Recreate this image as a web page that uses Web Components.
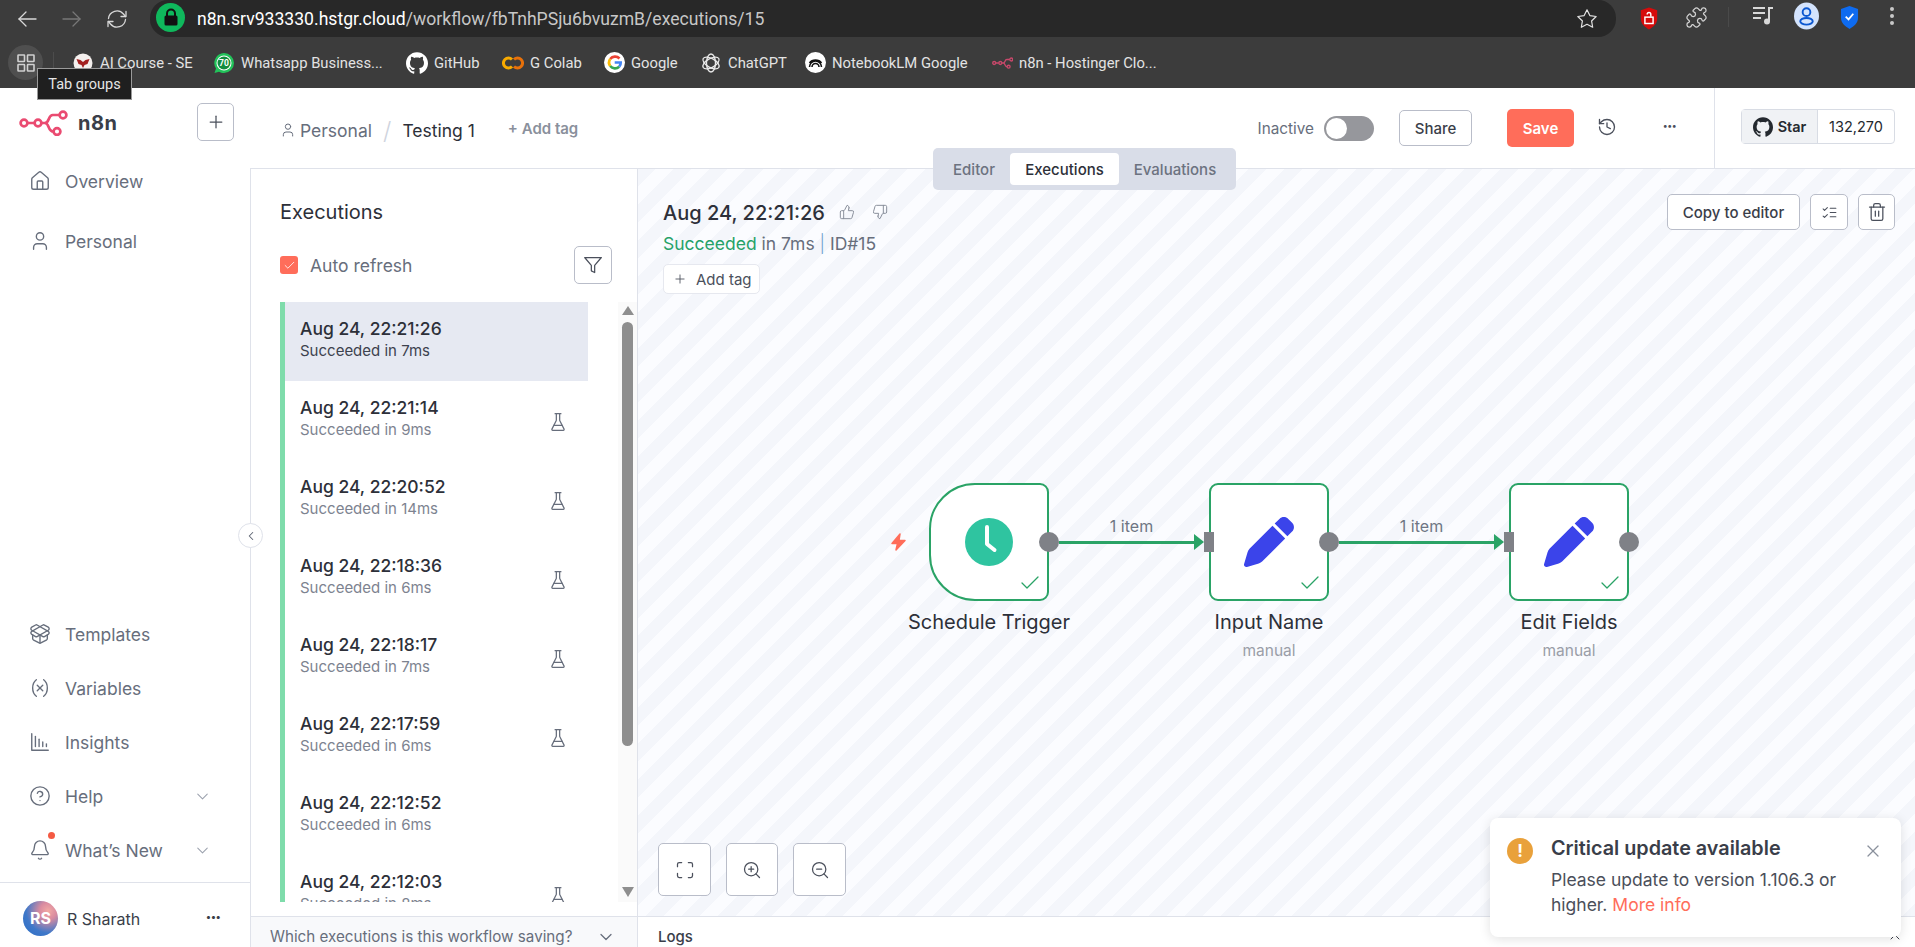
<!DOCTYPE html>
<html lang="en">
<head>
<meta charset="utf-8">
<title>n8n executions</title>
<style>
  html, body { margin: 0; padding: 0; width: 1915px; height: 947px; overflow: hidden; background: #fff; }
  body { display: flex; flex-direction: column; font-family: Inter, "Liberation Sans", sans-serif; color: #2d3039; }
</style>
</head>
<body>
<browser-chrome></browser-chrome>
<n8n-app>
  <n8n-sidebar slot="side"></n8n-sidebar>
  <n8n-header slot="head"></n8n-header>
  <exec-panel slot="panel">
    <exec-item date="Aug 24, 22:21:26" time="7ms" selected></exec-item>
    <exec-item date="Aug 24, 22:21:14" time="9ms" flask></exec-item>
    <exec-item date="Aug 24, 22:20:52" time="14ms" flask></exec-item>
    <exec-item date="Aug 24, 22:18:36" time="6ms" flask></exec-item>
    <exec-item date="Aug 24, 22:18:17" time="7ms" flask></exec-item>
    <exec-item date="Aug 24, 22:17:59" time="6ms" flask></exec-item>
    <exec-item date="Aug 24, 22:12:52" time="6ms"></exec-item>
    <exec-item date="Aug 24, 22:12:03" time="8ms" flask></exec-item>
  </exec-panel>
  <workflow-canvas slot="canvas">
    <wf-edge x1="421" x2="566" y="373">1 item</wf-edge>
    <wf-edge x1="701" x2="866" y="373">1 item</wf-edge>
    <wf-node x="291" y="314" kind="trigger">Schedule Trigger</wf-node>
    <wf-node x="571" y="314" kind="pen" sub="manual">Input Name</wf-node>
    <wf-node x="871" y="314" kind="pen" sub="manual">Edit Fields</wf-node>
  </workflow-canvas>
</n8n-app>
<update-toast></update-toast>

<script>
const ICONS = {
  house: '<path d="M15 21v-8a1 1 0 0 0-1-1h-4a1 1 0 0 0-1 1v8"/><path d="M3 10a2 2 0 0 1 .709-1.528l7-5.999a2 2 0 0 1 2.582 0l7 5.999A2 2 0 0 1 21 10v9a2 2 0 0 1-2 2H5a2 2 0 0 1-2-2z"/>',
  user: '<path d="M19 21v-2a4 4 0 0 0-4-4H9a4 4 0 0 0-4 4v2"/><circle cx="12" cy="7" r="4"/>',
  box: '<path d="M12 22v-9"/><path d="M15.17 2.21a1.67 1.67 0 0 1 1.63 0L21 4.57a1.93 1.93 0 0 1 0 3.36L8.82 14.79a1.655 1.655 0 0 1-1.64 0L3 12.43a1.93 1.93 0 0 1 0-3.36z"/><path d="M20 13v3.87a2.06 2.06 0 0 1-1.11 1.83l-6 3.08a1.93 1.93 0 0 1-1.78 0l-6-3.08A2.06 2.06 0 0 1 4 16.87V13"/><path d="M21 12.43a1.93 1.93 0 0 0 0-3.36L8.83 2.2a1.64 1.64 0 0 0-1.63 0L3 4.57a1.93 1.93 0 0 0 0 3.36l12.18 6.86a1.636 1.636 0 0 0 1.63 0z"/>',
  variable: '<path d="M8 21s-4-3-4-9 4-9 4-9"/><path d="M16 3s4 3 4 9-4 9-4 9"/><path d="m15 9-6 6"/><path d="m9 9 6 6"/>',
  chart: '<path d="M3 3v18h18"/><path d="M7 17V6"/><path d="M11 17V9"/><path d="M15 17v-5"/><path d="M19 17v-3"/>',
  help: '<circle cx="12" cy="12" r="10"/><path d="M9.09 9a3 3 0 0 1 5.83 1c0 2-3 3-3 3"/><path d="M12 17h.01"/>',
  bell: '<path d="M10.268 21a2 2 0 0 0 3.464 0"/><path d="M3.262 15.326A1 1 0 0 0 4 17h16a1 1 0 0 0 .74-1.673C19.41 13.956 18 12.499 18 8A6 6 0 0 0 6 8c0 4.499-1.411 5.956-2.738 7.326"/>',
  chevron: '<path d="m6 9 6 6 6-6"/>',
  chevronup: '<path d="m18 15-6-6-6 6"/>',
  chevronleft: '<path d="m15 18-6-6 6-6"/>',
  plus: '<path d="M5 12h14"/><path d="M12 5v14"/>',
  filter: '<polygon points="22 3 2 3 10 12.46 10 19 14 21 14 12.46 22 3"/>',
  flask: '<path d="M10 2v7.527a2 2 0 0 1-.211.896L4.72 20.55a1 1 0 0 0 .9 1.45h12.76a1 1 0 0 0 .9-1.45l-5.069-10.127A2 2 0 0 1 14 9.527V2"/><path d="M8.5 2h7"/><path d="M7 16h10"/>',
  history: '<path d="M3 12a9 9 0 1 0 9-9 9.75 9.75 0 0 0-6.74 2.74L3 8"/><path d="M3 3v5h5"/><path d="M12 7v5l4 2"/>',
  thumbup: '<path d="M7 10v12"/><path d="M15 5.88 14 10h5.83a2 2 0 0 1 1.92 2.56l-2.33 8A2 2 0 0 1 17.5 22H4a2 2 0 0 1-2-2v-8a2 2 0 0 1 2-2h2.76a2 2 0 0 0 1.79-1.11L12 2a3.13 3.13 0 0 1 3 3.88Z"/>',
  thumbdown: '<path d="M17 14V2"/><path d="M9 18.12 10 14H4.17a2 2 0 0 1-1.92-2.56l2.33-8A2 2 0 0 1 6.5 2H20a2 2 0 0 1 2 2v8a2 2 0 0 1-2 2h-2.76a2 2 0 0 0-1.79 1.11L12 22a3.13 3.13 0 0 1-3-3.88Z"/>',
  checks: '<path d="m3 7 2 2 4-4"/><path d="m3 17 2 2 4-4"/><path d="M13 6h8"/><path d="M13 12h8"/><path d="M13 18h8"/>',
  trash: '<path d="M3 6h18"/><path d="M19 6v14c0 1-1 2-2 2H7c-1 0-2-1-2-2V6"/><path d="M8 6V4c0-1 1-2 2-2h4c1 0 2 1 2 2v2"/><path d="M10 11v6"/><path d="M14 11v6"/>',
  fit: '<path d="M8 3H5a2 2 0 0 0-2 2v3"/><path d="M21 8V5a2 2 0 0 0-2-2h-3"/><path d="M3 16v3a2 2 0 0 0 2 2h3"/><path d="M16 21h3a2 2 0 0 0 2-2v-3"/>',
  zoomin: '<circle cx="11" cy="11" r="8"/><path d="m21 21-4.3-4.3"/><path d="M11 8v6"/><path d="M8 11h6"/>',
  zoomout: '<circle cx="11" cy="11" r="8"/><path d="m21 21-4.3-4.3"/><path d="M8 11h6"/>',
  close: '<path d="M18 6 6 18"/><path d="m6 6 12 12"/>',
  check: '<path d="M20 6 9 17l-5-5"/>',
  back: '<path d="m11 19-7-7 7-7"/><path d="M21 12H4"/>',
  forward: '<path d="M3 12h17"/><path d="m13 5 7 7-7 7"/>',
  reload: '<path d="M3.500 11.500a8.500 8.500 0 0 1 15-4.500l2 2.500"/><path d="M21 4.500v5h-5"/><path d="M20.500 12.500a8.500 8.500 0 0 1-15 4.500l-2-2.500"/><path d="M3 19.500v-5h5"/>',
  star: '<polygon points="12 2 15.09 8.26 22 9.27 17 14.14 18.18 21.02 12 17.77 5.82 21.02 7 14.14 2 9.27 8.91 8.26 12 2"/>',
  puzzle: '<path d="M15.39 4.39a1 1 0 0 0 1.68-.474 2.5 2.5 0 1 1 3.014 3.015 1 1 0 0 0-.474 1.68l1.683 1.682a2.414 2.414 0 0 1 0 3.414L19.61 15.39a1 1 0 0 1-1.68-.474 2.5 2.5 0 1 0-3.014 3.015 1 1 0 0 1 .474 1.68l-1.683 1.682a2.414 2.414 0 0 1-3.414 0L8.61 19.61a1 1 0 0 0-1.68.474 2.5 2.5 0 1 1-3.014-3.015 1 1 0 0 0 .474-1.68l-1.683-1.682a2.414 2.414 0 0 1 0-3.414L4.39 8.61a1 1 0 0 1 1.68.474 2.5 2.5 0 1 0 3.014-3.015 1 1 0 0 1-.474-1.68l1.683-1.682a2.414 2.414 0 0 1 3.414 0z"/>'
};
const GITHUB_PATH = 'M12 .297c-6.63 0-12 5.373-12 12 0 5.303 3.438 9.8 8.205 11.385.6.113.82-.258.82-.577 0-.285-.01-1.04-.015-2.04-3.338.724-4.042-1.61-4.042-1.61C4.422 18.07 3.633 17.7 3.633 17.7c-1.087-.744.084-.729.084-.729 1.205.084 1.838 1.236 1.838 1.236 1.07 1.835 2.809 1.305 3.495.998.108-.776.417-1.305.76-1.605-2.665-.3-5.466-1.332-5.466-5.93 0-1.31.465-2.38 1.235-3.22-.135-.303-.54-1.523.105-3.176 0 0 1.005-.322 3.3 1.23.96-.267 1.98-.399 3-.405 1.02.006 2.04.138 3 .405 2.28-1.552 3.285-1.23 3.285-1.23.645 1.653.24 2.873.12 3.176.765.84 1.23 1.91 1.23 3.22 0 4.61-2.805 5.625-5.475 5.92.42.36.81 1.096.81 2.22 0 1.606-.015 2.896-.015 3.286 0 .315.21.69.825.57C20.565 22.092 24 17.592 24 12.297c0-6.627-5.373-12-12-12';
const LOGO_MARK = '<g fill="none" stroke="currentColor"><circle cx="5" cy="13" r="3.4"/><circle cx="19" cy="13" r="3.4"/><circle cx="44" cy="5" r="3.4"/><circle cx="38" cy="21.5" r="3.4"/><path d="M8.4 13h7.2M22.4 13h3.4c5 0 3-8 8-8h6.8M25.8 13c5 0 2.6 8.500 8.800 8.500"/></g>';

class N8nIcon extends HTMLElement {
  constructor() {
    super();
    const size = this.getAttribute('size') || 20;
    const sw = this.getAttribute('stroke') || 2;
    this.attachShadow({ mode: 'open' });
    this.shadowRoot.innerHTML = `
      <style>:host { display: inline-flex; flex: none; width: ${size}px; height: ${size}px; } svg { display: block; }</style>
      <svg width="${size}" height="${size}" viewBox="0 0 24 24" fill="none" stroke="currentColor" stroke-width="${sw}" stroke-linecap="round" stroke-linejoin="round">${ICONS[this.getAttribute('name')] || ''}</svg>`;
  }
}
customElements.define('n8n-icon', N8nIcon);

// square outlined button used all over the workflow page
class IconButton extends HTMLElement {
  constructor() {
    super();
    const w = this.getAttribute('w') || 38;
    const h = this.getAttribute('h') || 38;
    this.attachShadow({ mode: 'open' });
    this.shadowRoot.innerHTML = `
      <style>
        :host { display: inline-flex; flex: none; align-items: center; justify-content: center; box-sizing: border-box; width: ${w}px; height: ${h}px;
          background: #fff; border: 1px solid #b9bdc9; border-radius: 5px; color: #4b505c; }
      </style>
      <n8n-icon name="${this.getAttribute('name')}" size="${this.getAttribute('size') || 20}" stroke="${this.getAttribute('stroke') || 1.7}"></n8n-icon>`;
  }
}
customElements.define('icon-button', IconButton);

class BookmarkItem extends HTMLElement {
  constructor() {
    super();
    this.attachShadow({ mode: 'open' });
    this.shadowRoot.innerHTML = `
      <style>
        :host { display: flex; flex: none; align-items: center; gap: 6px; width: ${this.getAttribute('w')}px; font-size: 14.8px; color: #e3e3e3; white-space: nowrap; }
        .ic { display: flex; width: 22px; height: 22px; flex: none; align-items: center; justify-content: center; }
      </style>
      <span class="ic"><slot name="icon"></slot></span><slot></slot>`;
  }
}
customElements.define('bookmark-item', BookmarkItem);

class BrowserChrome extends HTMLElement {
  constructor() {
    super();
    this.attachShadow({ mode: 'open' });
    this.shadowRoot.innerHTML = `
      <style>
        :host { display: block; flex: none; position: relative; z-index: 6; height: 88px; background: #3c3c3c; font-family: Roboto, "Liberation Sans", sans-serif; color: #e3e3e3; }
        .top { display: flex; align-items: center; height: 37px; }
        .nav { display: flex; width: 150px; flex: none; padding-left: 15px; box-sizing: border-box; gap: 21px; color: #d8d8d8; }
        .nav .off { color: #777; }
        .omni { display: flex; align-items: center; width: 1466px; height: 37px; flex: none; background: #282828; border-radius: 18px; }
        .lock { display: flex; align-items: center; justify-content: center; width: 29px; height: 29px; margin-left: 6px; margin-top: -3px; background: #0fb85c; border-radius: 50%; }
        .url { margin-left: 12px; font-size: 17.6px; color: #fff; white-space: nowrap; }
        .url span { color: #c7c7c7; }
        .star { margin-left: auto; margin-right: 18px; color: #e3e3e3; }
        .exts { display: flex; align-items: center; flex: 1; position: relative; height: 37px; }
        .exts > * { position: absolute; top: 6px; }
        .exts .div { left: 112px; top: 7px; width: 1px; height: 20px; background: #4a4a4a; }
        .bar { display: flex; align-items: center; height: 51px; }
        .groups { display: flex; align-items: center; justify-content: center; width: 35px; height: 35px; margin-left: 8px; background: #4f4f4f; border-radius: 50%; color: #d0d0d0; flex: none; }
        .sep { width: 1px; height: 22px; background: #4c4c4c; margin: 0 18px 0 10px; flex: none; }
        .tip { position: absolute; left: 37px; top: 68px; box-sizing: border-box; width: 95px; height: 32px; display: flex; align-items: center; justify-content: center; background: #1f1f1f; border: 1px solid #9a9a9a; color: #e6e6e6; font-size: 14.5px; white-space: nowrap; }
        svg { display: block; }
      </style>
      <div class="top">
        <div class="nav">
          <n8n-icon name="back" size="24" stroke="1.300"></n8n-icon>
          <n8n-icon class="off" name="forward" size="24" stroke="1.300"></n8n-icon>
          <n8n-icon name="reload" size="24" stroke="1.300"></n8n-icon>
        </div>
        <div class="omni">
          <div class="lock"><svg width="16" height="18" viewBox="0 0 16 18"><path d="M4 8V5.500a4 4 0 0 1 8 0V8" fill="none" stroke="#111" stroke-width="2"/><rect x="1.500" y="7.500" width="13" height="10" rx="1.500" fill="#111"/></svg></div>
          <div class="url">n8n.srv933330.hstgr.cloud<span>/workflow/fbTnhPSju6bvuzmB/executions/15</span></div>
          <n8n-icon class="star" name="star" size="22" stroke="1.300"></n8n-icon>
        </div>
        <div class="exts">
          <svg style="left:23px" width="20" height="25" viewBox="0 0 22 26"><path d="M11 1l9 3v9c0 6-4 9-9 12-5-3-9-6-9-12V4z" fill="#d60b0b"/><rect x="6.500" y="11.500" width="9" height="7" fill="none" stroke="#fff" stroke-width="1.600"/><path d="M13 11V8.500a2 2 0 0 0-4 0" fill="none" stroke="#fff" stroke-width="1.600"/></svg>
          <n8n-icon style="left:69px;top:6px;color:#d4d4d4" name="puzzle" size="23" stroke="1.300"></n8n-icon>
          <i class="div"></i>
          <svg style="left:137px;top:6px" width="22" height="20" viewBox="0 0 22 20" fill="#d8d8d8"><rect y="1" width="12" height="2"/><rect y="6" width="12" height="2"/><rect y="11" width="8" height="2"/><rect x="15" y="1" width="5" height="2"/><rect x="15" y="1" width="2" height="14"/><circle cx="14" cy="15.500" r="3"/></svg>
          <svg style="left:178px;top:2px" width="25" height="28" viewBox="0 0 26 28"><ellipse cx="13" cy="14" rx="13" ry="14" fill="#d3e3fd"/><circle cx="13" cy="10" r="4" fill="none" stroke="#0b57d0" stroke-width="2"/><ellipse cx="13" cy="19.500" rx="6.500" ry="3.500" fill="none" stroke="#0b57d0" stroke-width="2"/></svg>
          <svg style="left:224px;top:5px" width="19" height="25" viewBox="0 0 20 26"><path d="M10 1l9 3v9c0 6-4 9-9 12-5-3-9-6-9-12V4z" fill="#0e6bf0"/><path d="M6 12l3 3 5-6" fill="none" stroke="#fff" stroke-width="1.800"/></svg>
          <svg style="left:273px;top:4px" width="6" height="24" viewBox="0 0 6 24" fill="#c8c8c8"><circle cx="3" cy="5" r="2"/><circle cx="3" cy="12" r="2"/><circle cx="3" cy="19" r="2"/></svg>
        </div>
      </div>
      <div class="bar">
        <div class="groups"><svg width="18" height="18" viewBox="0 0 18 18" fill="none" stroke="currentColor" stroke-width="1.600"><rect x="1" y="1" width="6.500" height="6.500" rx=".5"/><rect x="10.500" y="1" width="6.500" height="6.500" rx=".5"/><rect x="1" y="10.500" width="6.500" height="6.500" rx=".5"/><rect x="10.500" y="10.500" width="6.500" height="6.500" rx=".5"/></svg></div>
        <div class="sep"></div>
        <bookmark-item w="141"><svg slot="icon" width="20" height="20" viewBox="0 0 20 20"><circle cx="10" cy="10" r="9.500" fill="#f4f0ee"/><path d="M3.500 6l4 1 2.500 2 2.500-2 4-1-2 5-3 1-1.500 3-1.500-3-3-1z" fill="#a32020"/></svg>AI Course - SE</bookmark-item>
        <bookmark-item w="193"><svg slot="icon" width="22" height="22" viewBox="0 0 22 22"><path d="M11 1a10 10 0 0 1 0 20c-2 0-3.500-.5-5-1.300L1.500 21 3 16.500A10 10 0 0 1 11 1z" fill="#22c35a"/><circle cx="11" cy="11" r="7.500" fill="#fff"/><circle cx="11" cy="11" r="6.500" fill="#128c3e"/><text x="11" y="14" text-anchor="middle" font-size="8.500" font-weight="700" fill="#fff" font-family="Roboto">70</text></svg>Whatsapp Business...</bookmark-item>
        <bookmark-item w="96"><svg slot="icon" width="22" height="22" viewBox="0 0 24 24" fill="#fff"><path d="${GITHUB_PATH}"/></svg>GitHub</bookmark-item>
        <bookmark-item w="101"><svg slot="icon" width="22" height="14" viewBox="0 0 22 14" fill="none" stroke-width="3"><path d="M10 3.500a5 5 0 1 0 0 7" stroke="#f9ab00"/><path d="M12 3.500a5 5 0 1 1 0 7" stroke="#e8710a"/></svg>G Colab</bookmark-item>
        <bookmark-item w="97"><svg slot="icon" width="21" height="21" viewBox="0 0 21 21"><circle cx="10.500" cy="10.500" r="10.500" fill="#fff"/><g fill="none" stroke-width="2.700"><path d="M15.500 6.500a6.200 6.200 0 0 0-9.300.5" stroke="#ea4335"/><path d="M6.200 7a6.200 6.200 0 0 0 0 7" stroke="#fbbc05"/><path d="M6.200 14a6.200 6.200 0 0 0 9 .7" stroke="#34a853"/><path d="M15.200 14.700a6 6 0 0 0 1.500-4.200h-6" stroke="#4285f4"/></g></svg>Google</bookmark-item>
        <bookmark-item w="104"><svg slot="icon" width="20" height="20" viewBox="0 0 20 20" fill="none" stroke="#e8e8e8" stroke-width="1.300"><ellipse cx="10" cy="10" rx="4.500" ry="9"/><ellipse cx="10" cy="10" rx="4.500" ry="9" transform="rotate(60 10 10)"/><ellipse cx="10" cy="10" rx="4.500" ry="9" transform="rotate(120 10 10)"/></svg>ChatGPT</bookmark-item>
        <bookmark-item w="187"><svg slot="icon" width="21" height="21" viewBox="0 0 21 21"><circle cx="10.500" cy="10.500" r="10.500" fill="#fff"/><g fill="none" stroke="#111" stroke-width="1.600"><path d="M4.500 15a6 6 0 0 1 12 0"/><path d="M7 15a3.500 3.500 0 0 1 7 0"/><path d="M4.500 11a7 6 0 0 1 12 0"/></g></svg>NotebookLM Google</bookmark-item>
        <bookmark-item><svg slot="icon" width="21" height="12" viewBox="0 0 48 26" style="color:#c9486b" stroke-width="3">${LOGO_MARK}</svg>n8n - Hostinger Clo...</bookmark-item>
      </div>
      <div class="tip">Tab groups</div>`;
  }
}
customElements.define('browser-chrome', BrowserChrome);

class N8nApp extends HTMLElement {
  constructor() {
    super();
    this.attachShadow({ mode: 'open' });
    this.shadowRoot.innerHTML = `
      <style>
        :host { display: grid; flex: 1; min-height: 0; grid-template-columns: 250px 1fr; grid-template-rows: 81px 1fr; }
        .side { grid-row: 1 / 3; display: flex; min-height: 0; }
        .head { display: flex; min-width: 0; }
        .body { display: flex; min-height: 0; min-width: 0; }
      </style>
      <div class="side"><slot name="side"></slot></div>
      <div class="head"><slot name="head"></slot></div>
      <div class="body"><slot name="panel"></slot><slot name="canvas"></slot></div>`;
  }
}
customElements.define('n8n-app', N8nApp);

class SideItem extends HTMLElement {
  constructor() {
    super();
    const h = this.getAttribute('h') || 54;
    const more = this.hasAttribute('more')
      ? '<n8n-icon class="more" name="chevron" size="19" stroke="1.3"></n8n-icon>' : '';
    const dot = this.hasAttribute('dot') ? '<i class="dot"></i>' : '';
    this.attachShadow({ mode: 'open' });
    this.shadowRoot.innerHTML = `
      <style>
        :host { display: flex; align-items: center; gap: 14px; height: ${h}px; padding: 0 38px 0 29px; font-size: 17.5px; color: #676e7c; }
        .ic { position: relative; display: flex; }
        .dot { position: absolute; left: 19px; top: -7px; width: 7px; height: 7px; border-radius: 50%; background: #f45a43; }
        .more { margin-left: auto; color: #9ba1ad; }
      </style>
      <span class="ic"><n8n-icon name="${this.getAttribute('icon')}" size="22" stroke="1.500"></n8n-icon>${dot}</span><slot></slot>${more}`;
  }
}
customElements.define('side-item', SideItem);

class N8nSidebar extends HTMLElement {
  constructor() {
    super();
    this.attachShadow({ mode: 'open' });
    this.shadowRoot.innerHTML = `
      <style>
        :host { display: flex; flex-direction: column; width: 251px; flex: none; box-sizing: border-box; border-right: 1px solid #dfe2ea; position: relative; background: #fff; }
        .logo { display: flex; align-items: flex-start; justify-content: space-between; height: 63px; box-sizing: border-box; padding: 15px 16px 0 19px; }
        .brand { display: flex; align-items: center; gap: 10px; height: 40px; color: #ea4b71; }
        .brand b { color: #3a3e49; font-size: 20px; font-weight: 700; letter-spacing: .5px; }
        svg { display: block; }
        .grow { flex: 1; }
        .user { display: flex; align-items: center; gap: 9px; height: 65px; box-sizing: border-box; margin-top: 5px; padding: 8px 29px 0 23px; border-top: 1px solid #dfe2ea; font-size: 16px; font-weight: 400; color: #3a3e49; }
        .avatar { display: flex; align-items: center; justify-content: center; width: 35px; height: 35px; border-radius: 50%; color: #fff; font-size: 16px; font-weight: 700; flex: none; margin-top: -2px;
          background: radial-gradient(circle at 72% 28%, #f2a9a4 0, #d98ba0 24%, #3f78c9 62%, #2a6cc4 100%); }
        .dots { margin-left: auto; font-weight: 800; letter-spacing: .5px; color: #3a3e49; font-size: 10px; line-height: 8px; margin-top: -6px; }
        .collapse { position: absolute; right: -13px; top: 435px; width: 25px; height: 25px; box-sizing: border-box; display: flex; align-items: center; justify-content: center; border: 1px solid #dfe2ea; border-radius: 50%; background: #fff; color: #5c6371; z-index: 2; }
      </style>
      <div class="logo">
        <div class="brand">
          <svg width="49" height="26" viewBox="0 0 49 26" stroke-width="2.700">${LOGO_MARK}</svg>
          <b>n8n</b>
        </div>
        <icon-button name="plus" w="37" h="38" size="20" stroke="1.500"></icon-button>
      </div>
      <side-item icon="house" h="60">Overview</side-item>
      <side-item icon="user" h="60">Personal</side-item>
      <div class="grow"></div>
      <side-item icon="box">Templates</side-item>
      <side-item icon="variable">Variables</side-item>
      <side-item icon="chart">Insights</side-item>
      <side-item icon="help" more>Help</side-item>
      <side-item icon="bell" more dot>What’s New</side-item>
      <div class="user"><span class="avatar">RS</span>R Sharath<span class="dots">•••</span></div>
      <div class="collapse"><n8n-icon name="chevronleft" size="14" stroke="1.800"></n8n-icon></div>`;
  }
}
customElements.define('n8n-sidebar', N8nSidebar);

class N8nHeader extends HTMLElement {
  constructor() {
    super();
    this.attachShadow({ mode: 'open' });
    this.shadowRoot.innerHTML = `
      <style>
        :host { display: flex; flex: 1; align-items: center; position: relative; z-index: 4; box-sizing: border-box; padding-left: 30px; border-bottom: 1px solid #dfe2ea; background: #fff; font-size: 17.5px; color: #676e7c; }
        .crumb { display: flex; align-items: center; gap: 4px; margin-top: 4px; }
        .slash { margin: 4px 11px 0; color: #cfd4de; font-size: 24px; font-weight: 300; }
        .name { color: #2d3039; margin-top: 4px; }
        .tag { margin-left: 33px; font-size: 15px; font-weight: 600; color: #8a909c; margin-top: 1px; }
        .state { margin-left: auto; font-size: 15.300px; color: #676e7c; }
        .toggle { width: 50px; height: 25px; margin-left: 10px; box-sizing: border-box; padding: 2px; border-radius: 13px; background: #96979c; flex: none; }
        .toggle i { display: block; width: 21px; height: 21px; border-radius: 50%; background: #fff; }
        .share, .save { display: flex; align-items: center; justify-content: center; box-sizing: border-box; border-radius: 5px; font-size: 15px; font-weight: 500; flex: none; }
        .share { width: 73px; height: 36px; margin-left: 25px; border: 1px solid #b9bdc9; color: #3a3e49; }
        .save { width: 67px; height: 38px; margin-left: 35px; background: #ff6d5a; color: #fff; font-weight: 600; }
        .hist { margin-left: 23px; margin-top: -3px; color: #4b505c; }
        .dots { width: 20px; margin-left: 43px; margin-top: -5px; text-align: center; color: #4b505c; font-size: 9px; font-weight: 800; letter-spacing: .5px; }
        .gh { display: flex; align-items: center; align-self: stretch; margin-left: 34px; padding: 0 20px 3px 26px; border-left: 1px solid #dfe2ea; }
        .star { display: flex; height: 35px; width: 154px; box-sizing: border-box; border: 1px solid #d8dce4; border-radius: 4px; font-size: 14.500px; color: #24292f; }
        .star > span { display: flex; align-items: center; justify-content: center; }
        .star .l { width: 76px; gap: 5px; background: #f0f2f5; border-right: 1px solid #d8dce4; font-weight: 600; box-sizing: border-box; }
        .star .r { flex: 1; }
        svg { display: block; }
        .tabs { position: absolute; left: 683px; top: 60px; display: flex; align-items: center; box-sizing: border-box; width: 303px; height: 42px; padding: 0 5px; background: #d9dde8; border-radius: 5px; font-size: 15px; font-weight: 500; color: #6c7280; }
        .tabs span { display: flex; align-items: center; justify-content: center; height: 32px; }
        .tabs .a { width: 72px; }
        .tabs .b { width: 109px; background: #fff; border-radius: 4px; color: #2d3039; }
        .tabs .c { flex: 1; }
      </style>
      <div class="crumb"><n8n-icon name="user" size="16" stroke="1.500"></n8n-icon>Personal</div>
      <span class="slash">/</span>
      <span class="name">Testing 1</span>
      <span class="tag">+ Add tag</span>
      <span class="state">Inactive</span>
      <div class="toggle"><i></i></div>
      <div class="share">Share</div>
      <div class="save">Save</div>
      <n8n-icon class="hist" name="history" size="20" stroke="1.600"></n8n-icon>
      <div class="dots">•••</div>
      <div class="gh">
        <div class="star">
          <span class="l"><svg width="20" height="20" viewBox="0 0 24 24" fill="#24292f"><path d="${GITHUB_PATH}"/></svg>Star</span>
          <span class="r">132,270</span>
        </div>
      </div>
      <div class="tabs"><span class="a">Editor</span><span class="b">Executions</span><span class="c">Evaluations</span></div>`;
  }
}
customElements.define('n8n-header', N8nHeader);

class ExecPanel extends HTMLElement {
  constructor() {
    super();
    this.attachShadow({ mode: 'open' });
    this.shadowRoot.innerHTML = `
      <style>
        :host { display: flex; flex-direction: column; flex: none; width: 388px; box-sizing: border-box; border-right: 1px solid #dfe2ea; background: #fff; min-height: 0; }
        h2 { margin: 29px 0 20px 30px; font-size: 20px; line-height: 28px; font-weight: 400; color: #2d3039; }
        .tools { display: flex; align-items: center; height: 38px; padding: 0 25px 0 30px; font-size: 17.5px; color: #676e7c; }
        .cb { display: flex; align-items: center; justify-content: center; width: 18px; height: 18px; margin-right: 12px; border-radius: 3px; background: #ff6d5a; color: #fff; }
        .tools icon-button { margin-left: auto; }
        .wrap { display: flex; height: 600px; margin: 18px 0 14px 30px; }
        .list { width: 308px; border-left: 5px solid #7fdcab; box-sizing: border-box; overflow: hidden; flex: none; }
        .scroll { display: flex; flex-direction: column; align-items: center; width: 19px; margin-left: 30px; background: #fafafa; flex: none; box-sizing: border-box; padding-top: 4px; }
        .up, .down { width: 0; height: 0; border-left: 6px solid transparent; border-right: 6px solid transparent; }
        .up { border-bottom: 9px solid #8e8e8e; }
        .down { border-top: 10px solid #8e8e8e; margin-top: auto; margin-bottom: 5px; }
        .thumb { width: 11px; height: 424px; margin-top: 7px; border-radius: 6px; background: #8e8e8e; }
        .foot { display: flex; align-items: center; justify-content: space-between; flex: 1; box-sizing: border-box; padding: 9px 21px 0 20px; border-top: 1px solid #dfe2ea; background: #f8f9fb; font-size: 15.200px; color: #676e7c; }
      </style>
      <h2>Executions</h2>
      <div class="tools">
        <span class="cb"><n8n-icon name="check" size="13" stroke="1.500"></n8n-icon></span>Auto refresh
        <icon-button name="filter" size="20" stroke="1.500"></icon-button>
      </div>
      <div class="wrap">
        <div class="list"><slot></slot></div>
        <div class="scroll"><i class="up"></i><i class="thumb"></i><i class="down"></i></div>
      </div>
      <div class="foot">Which executions is this workflow saving?<n8n-icon name="chevron" size="20" stroke="1.500"></n8n-icon></div>`;
  }
}
customElements.define('exec-panel', ExecPanel);

class ExecItem extends HTMLElement {
  constructor() {
    super();
    const flask = this.hasAttribute('flask')
      ? '<n8n-icon class="flask" name="flask" size="20" stroke="1.500"></n8n-icon>' : '';
    this.attachShadow({ mode: 'open' });
    this.shadowRoot.innerHTML = `
      <style>
        :host { display: flex; align-items: center; box-sizing: border-box; height: 79px; padding: 14px 0 20px 15px; position: relative; }
        :host([selected]) { background: #e6e9f2; }
        :host([selected]) .sub { color: #3d424e; }
        .date { font-size: 17.5px; line-height: 24px; font-weight: 500; color: #2d3039; }
        .sub { font-size: 15px; line-height: 20px; color: #7d8390; }
        .flask { margin-left: auto; margin-right: 20px; margin-top: 8px; color: #676e7c; }
      </style>
      <div><div class="date">${this.getAttribute('date')}</div><div class="sub">Succeeded in ${this.getAttribute('time')}</div></div>${flask}`;
  }
}
customElements.define('exec-item', ExecItem);

class WorkflowCanvas extends HTMLElement {
  constructor() {
    super();
    this.attachShadow({ mode: 'open' });
    this.shadowRoot.innerHTML = `
      <style>
        :host { display: flex; flex-direction: column; flex: 1; min-width: 0; min-height: 0; }
        .stage { position: relative; flex: 1; overflow: hidden; min-height: 0; background: repeating-linear-gradient(135deg, #f4f6fb 0 12.700px, #fbfcff 12.700px 25.400px); }
        .bar { display: flex; justify-content: space-between; padding: 25px 20px 0 25px; }
        .date { display: flex; align-items: center; gap: 14px; height: 36px; margin-top: 1px; font-size: 20px; font-weight: 500; color: #2d3039; }
        .date n8n-icon { color: #8a909c; margin-top: -2px; }
        .date n8n-icon + n8n-icon { margin-left: 3px; }
        .status { font-size: 17.5px; line-height: 26px; margin-top: 0; color: #676e7c; }
        .status b { font-weight: 400; color: #26a269; }
        .status i { font-style: normal; color: #6f9fd0; font-weight: 300; }
        .tag { display: flex; align-items: center; gap: 9px; height: 30px; box-sizing: border-box; padding: 0 9px; margin-top: 7px; background: #fff; border: 1px solid #e6e8ef; border-radius: 5px; font-size: 15px; color: #4b505c; width: 97px; white-space: nowrap; }
        .acts { display: flex; align-items: flex-start; gap: 10px; }
        .copy { display: flex; align-items: center; justify-content: center; box-sizing: border-box; width: 133px; height: 36px; background: #fff; border: 1px solid #b9bdc9; border-radius: 5px; font-size: 15px; font-weight: 500; color: #3a3e49; }
        .zoom { position: absolute; left: 20px; top: 674px; display: flex; gap: 15px; }
        .logs { display: flex; align-items: center; justify-content: space-between; flex: none; height: 31px; box-sizing: border-box; padding: 9px 12px 0 20px; border-top: 1px solid #dfe2ea; background: #fff; font-size: 15px; font-weight: 500; color: #3a3e49; }
      </style>
      <div class="stage">
        <div class="bar">
          <div>
            <div class="date">Aug 24, 22:21:26 <n8n-icon name="thumbup" size="16" stroke="1.500"></n8n-icon><n8n-icon name="thumbdown" size="16" stroke="1.500"></n8n-icon></div>
            <div class="status"><b>Succeeded</b> in 7ms <i>|</i> ID#15</div>
            <div class="tag"><n8n-icon name="plus" size="14" stroke="1.500"></n8n-icon>Add tag</div>
          </div>
          <div class="acts">
            <div class="copy">Copy to editor</div>
            <icon-button name="checks" w="38" h="36" size="17" stroke="1.500"></icon-button>
            <icon-button name="trash" w="37" h="36" size="20" stroke="1.500"></icon-button>
          </div>
        </div>
        <slot></slot>
        <div class="zoom">
          <icon-button name="fit" w="53" h="53" size="20" stroke="1.500"></icon-button>
          <icon-button name="zoomin" w="52" h="53" size="20" stroke="1.500"></icon-button>
          <icon-button name="zoomout" w="53" h="53" size="20" stroke="1.500"></icon-button>
        </div>
      </div>
      <div class="logs">Logs<n8n-icon name="chevronup" size="16" stroke="1.500"></n8n-icon></div>`;
  }
}
customElements.define('workflow-canvas', WorkflowCanvas);

class WfEdge extends HTMLElement {
  constructor() {
    super();
    const x1 = +this.getAttribute('x1');
    const x2 = +this.getAttribute('x2');
    this.attachShadow({ mode: 'open' });
    this.shadowRoot.innerHTML = `
      <style>
        :host { position: absolute; left: ${x1}px; top: ${this.getAttribute('y') - 26}px; width: ${x2 - x1}px; height: 37px; }
        .label { position: absolute; left: 0; right: 0; top: 0; text-align: center; font-size: 16px; line-height: 20px; color: #6f7684; }
        .line { position: absolute; left: 0; right: 9px; top: 24.500px; height: 3px; background: #2aa366; }
        .tip { position: absolute; right: 0; top: 18px; width: 0; height: 0; border-left: 10px solid #2aa366; border-top: 8px solid transparent; border-bottom: 8px solid transparent; }
      </style>
      <div class="label"><slot></slot></div><div class="line"></div><div class="tip"></div>`;
  }
}
customElements.define('wf-edge', WfEdge);

class WfNode extends HTMLElement {
  constructor() {
    super();
    const trigger = this.getAttribute('kind') === 'trigger';
    const sub = this.getAttribute('sub');
    const art = trigger
      ? `<svg width="48" height="48" viewBox="0 0 48 48"><circle cx="24" cy="24" r="24" fill="#2fc4a0"/><path d="M22 9v17l7.500 6" fill="none" stroke="#fff" stroke-width="4" stroke-linecap="round" stroke-linejoin="round"/></svg>`
      : `<svg width="50" height="50" viewBox="0 0 512 512" fill="#3b44ea"><path d="M362.700 19.300L314.300 67.700 444.300 197.700l48.400-48.400c25-25 25-65.500 0-90.500L453.300 19.300c-25-25-65.500-25-90.500 0zm-71 71L58.600 323.500c-10.400 10.400-18 23.300-22.200 37.400L1 481.200C-1.500 489.700 .8 498.800 7 505s15.300 8.500 23.700 6.100l120.300-35.400c14.100-4.200 27-11.800 37.400-22.200L421.700 220.300 291.700 90.300z"/></svg>`;
    this.attachShadow({ mode: 'open' });
    this.shadowRoot.innerHTML = `
      <style>
        :host { position: absolute; left: ${this.getAttribute('x')}px; top: ${this.getAttribute('y')}px; width: 120px; height: 118px; }
        .box { display: flex; align-items: center; justify-content: center; box-sizing: border-box; width: 120px; height: 118px; background: #fff; border: 2px solid #2aa366; border-radius: ${trigger ? '46px 9px 9px 46px' : '9px'}; }
        .out { position: absolute; right: -10px; top: 49px; width: 20px; height: 20px; border-radius: 50%; background: #7f8187; }
        .in { position: absolute; left: -5px; top: 49px; width: 10px; height: 20px; background: #7f8187; display: ${trigger ? 'none' : 'block'}; }
        .ok { position: absolute; right: 7px; bottom: 6px; color: #2aa366; }
        .bolt { position: absolute; left: -40px; top: 49px; display: ${trigger ? 'block' : 'none'}; }
        .text { position: absolute; left: -60px; right: -60px; top: 126px; text-align: center; }
        .name { font-size: 20px; line-height: 26px; font-weight: 400; color: #2d3039; white-space: nowrap; }
        .sub { margin-top: 6px; font-size: 15.500px; line-height: 20px; color: #9a9ea8; }
        svg { display: block; }
      </style>
      <svg class="bolt" width="20" height="20" viewBox="0 0 20 20" fill="#ff6d5a" stroke="#ff6d5a" stroke-width="1.500" stroke-linejoin="round"><path d="M11 2 3 11.500h5.500L7 18l9-9.500h-6z"/></svg>
      <div class="box">${art}</div>
      <div class="in"></div><div class="out"></div>
      <n8n-icon class="ok" name="check" size="24" stroke="1.300"></n8n-icon>
      <div class="text"><div class="name"><slot></slot></div>${sub ? `<div class="sub">${sub}</div>` : ''}</div>`;
  }
}
customElements.define('wf-node', WfNode);

class UpdateToast extends HTMLElement {
  constructor() {
    super();
    this.attachShadow({ mode: 'open' });
    this.shadowRoot.innerHTML = `
      <style>
        :host { position: absolute; left: 1490px; top: 818px; z-index: 5; display: flex; box-sizing: border-box; width: 411px; height: 119px; padding: 20px 18px 0 17px; background: #fff; border-radius: 8px; box-shadow: 0 2px 12px rgba(0,0,0,.12); color: #4b4f5a; }
        .warn { display: flex; align-items: center; justify-content: center; flex: none; width: 26px; height: 26px; margin-right: 18px; border-radius: 50%; background: #e9a13b; color: #fff; font-size: 17px; font-weight: 700; }
        h4 { margin: 0; font-size: 19.800px; line-height: 20px; font-weight: 600; color: #3a3e49; }
        p { margin: 9px 0 0; font-size: 17.5px; line-height: 25px; }
        a { color: #ff6d5a; }
        .x { margin-left: auto; margin-top: 3px; color: #8a909c; }
      </style>
      <div class="warn">!</div>
      <div><h4>Critical update available</h4><p>Please update to version 1.106.3 or<br>higher. <a>More info</a></p></div>
      <n8n-icon class="x" name="close" size="20" stroke="1.500"></n8n-icon>`;
  }
}
customElements.define('update-toast', UpdateToast);
</script>
</body>
</html>
